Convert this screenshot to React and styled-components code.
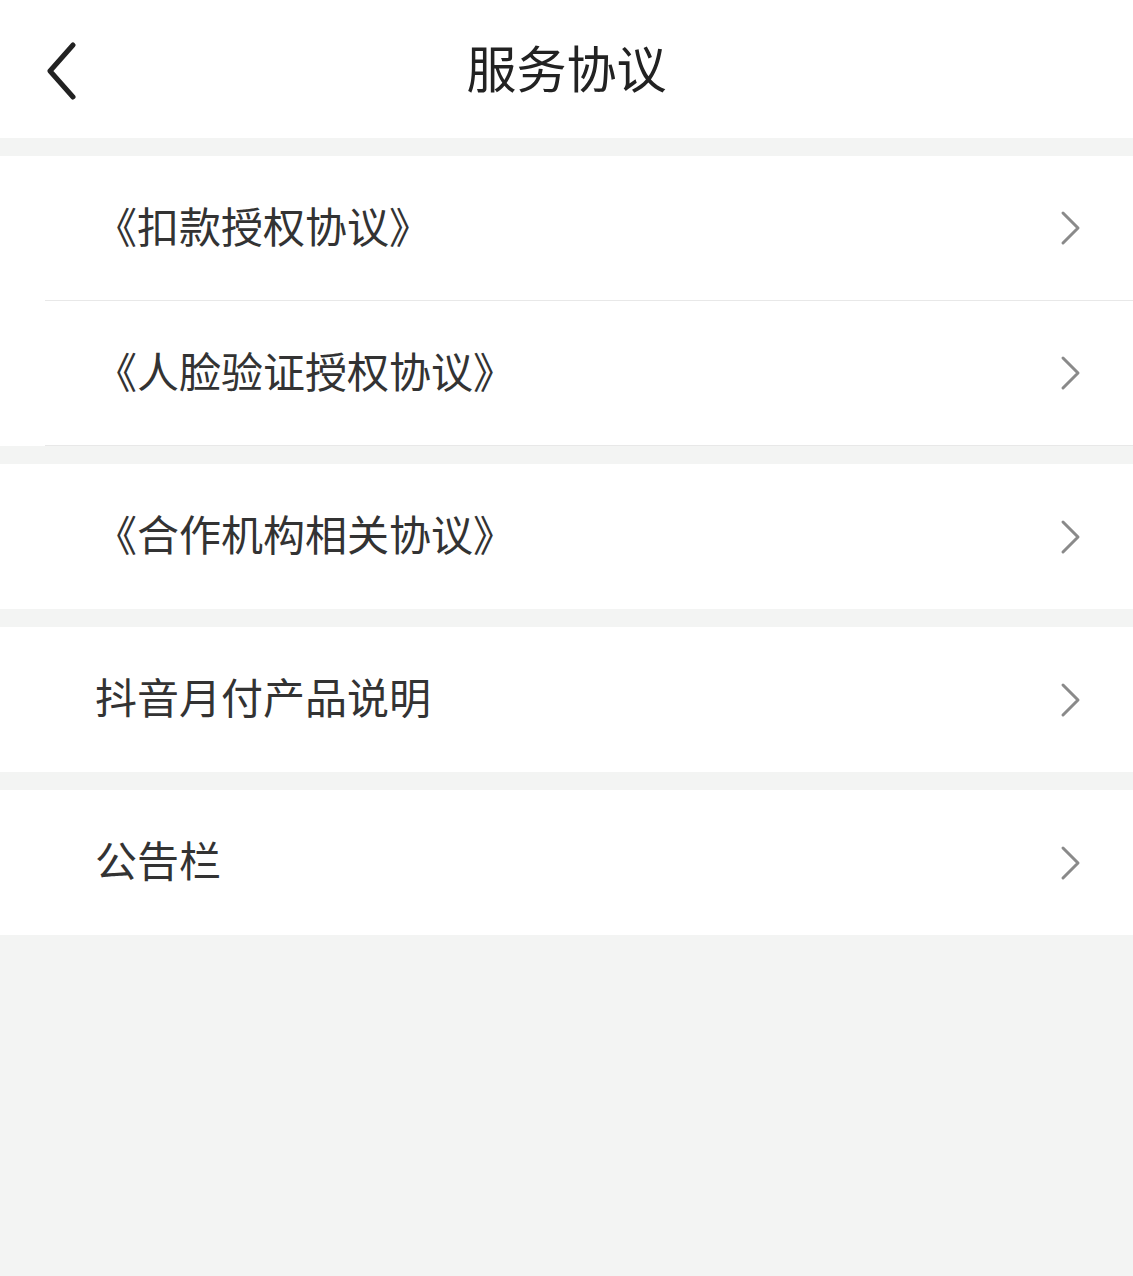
import React from "react";
import styled, { createGlobalStyle } from "styled-components";

const GlobalStyle = createGlobalStyle`
	html, body {
		margin: 0;
		padding: 0;
		background: #f3f4f3;
		font-family: "Noto Sans CJK SC", "Noto Sans", sans-serif;
	}
`;

const groups = [
	["《扣款授权协议》", "《人脸验证授权协议》"],
	["《合作机构相关协议》"],
	["抖音月付产品说明"],
	["公告栏"],
];

export default function App() {
	return (
		<Page>
			<GlobalStyle />
			<Header>
				<Back aria-label="返回">
					<svg width="36" height="58" viewBox="0 0 36 58">
						<path
							d="M29 3 L6 29 L29 55"
							fill="none"
							stroke="#222"
							strokeWidth="5"
							strokeLinecap="round"
							strokeLinejoin="round"
						/>
					</svg>
				</Back>
				<Title>服务协议</Title>
			</Header>
			{groups.map((items, gi) => (
				<Group key={gi}>
					{items.map((label) => (
						<Row key={label} $divided={items.length > 1}>
							<Label>{label}</Label>
							<Arrow width="24" height="36" viewBox="0 0 24 36">
								<path
									d="M4 3 L19 18 L4 33"
									fill="none"
									stroke="#8a8a8a"
									strokeWidth="3"
									strokeLinecap="round"
									strokeLinejoin="round"
								/>
							</Arrow>
						</Row>
					))}
				</Group>
			))}
		</Page>
	);
}

const Page = styled.div`
	min-height: 1276px;
	background: #f3f4f3;
`;
const Header = styled.div`
	position: relative;
	height: 138px;
	background: #fff;
	display: flex;
	align-items: center;
	justify-content: center;
`;
const Back = styled.div`
	position: absolute;
	left: 44px;
	top: 42px;
	display: flex;
`;
const Title = styled.div`
	font-size: 50px;
	color: #222;
	line-height: 1;
	margin-bottom: 6px;
`;
const Group = styled.div`
	margin-top: 18px;
	background: #fff;
`;
const Row = styled.div`
	height: ${(p) => (p.$divided ? "144px" : "145px")};
	margin-left: 45px;
	padding-left: 50px;
	padding-right: 50px;
	display: flex;
	align-items: center;
	justify-content: space-between;
	border-bottom: ${(p) => (p.$divided ? "1px solid #e8e8e8" : "none")};
`;
const Label = styled.div`
	font-size: 42px;
	color: #333;
	line-height: 1;
	margin-bottom: 7px;
`;
const Arrow = styled.svg`
	display: block;
`;
